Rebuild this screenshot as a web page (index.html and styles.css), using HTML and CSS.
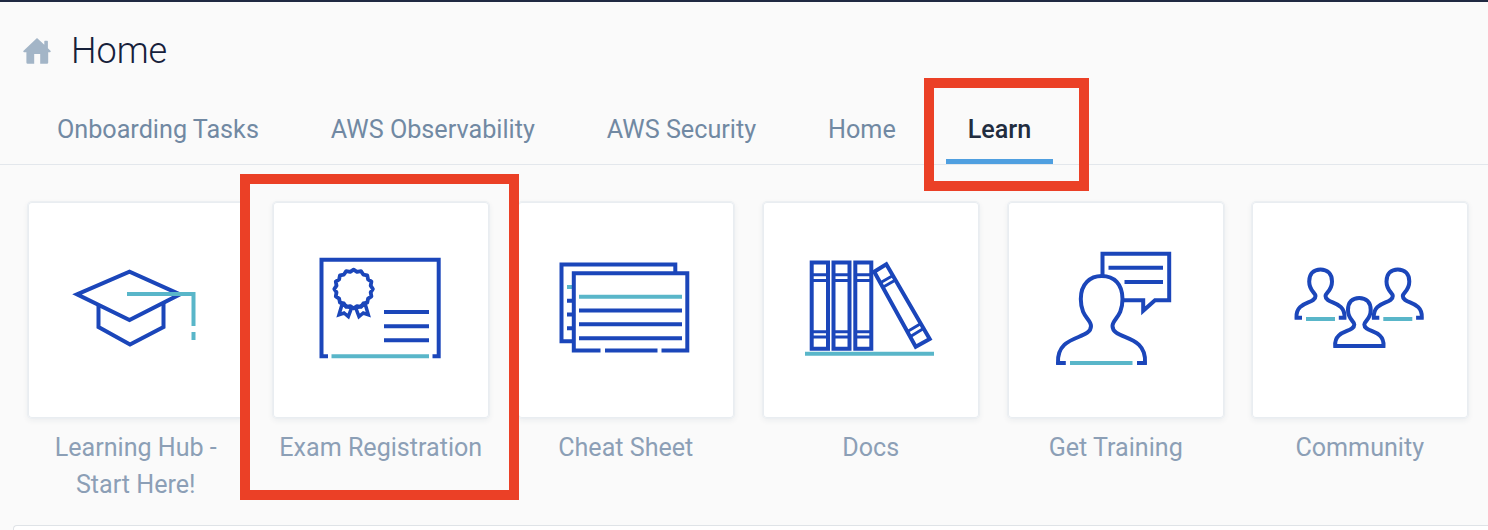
FILE: index.html
```html
<!DOCTYPE html>
<html lang="en">
<head>
<meta charset="utf-8">
<title>Home</title>
<link rel="stylesheet" href="styles.css">
</head>
<body>
<header class="page-header">
  <svg class="home-icon" viewBox="0 0 28 26"><path d="M14 0 L21.3 6.7 V3.4 Q21.3 2.7 22 2.7 H24.2 Q24.9 2.7 24.9 3.4 V10.2 L27.7 13 Q28 14 27 14.2 H25.2 V24.6 Q25.2 25.8 24 25.8 H17.2 V16 H11.2 V25.8 H4.600 Q3.400 25.800 3.400 24.600 V14.200 H1 Q0 14 .3 13 Z"/></svg>
  <h1 class="title">Home</h1>
</header>
<nav class="tabs">
  <a class="tab">Onboarding Tasks</a>
  <a class="tab">AWS Observability</a>
  <a class="tab">AWS Security</a>
  <a class="tab">Home</a>
  <a class="tab active">Learn</a>
</nav>
<main class="tiles">
  <a class="tile">
    <svg class="art" viewBox="28 202 216 216">
      <path d="M98.500 305 V327 L130 344.500 L163.500 327 V303"/>
      <path d="M77 294.300 L129.500 271.700 L180 294.300 L129.500 320 Z"/>
      <path class="teal" d="M127 294 H193.500 V326 M193.500 332 V340"/>
    </svg>
    <span class="label">Learning Hub -<br>Start Here!</span>
  </a>
  <a class="tile">
    <svg class="art" viewBox="273 202 216 216">
      <path d="M328 356.300 H321.500 V259.800 H438.700 V356.300 H432.500"/>
      <path class="rosette" transform="translate(353.600 289)" d="M19.300 0 L17.070 3.390 L17.830 7.390 L14.470 9.670 L13.650 13.650 L9.670 14.470 L7.390 17.830 L3.390 17.070 L0 19.300 L-3.390 17.070 L-7.390 17.830 L-9.670 14.470 L-13.650 13.650 L-14.470 9.670 L-17.830 7.390 L-17.070 3.390 L-19.300 0 L-17.070 -3.390 L-17.830 -7.390 L-14.470 -9.670 L-13.650 -13.650 L-9.670 -14.470 L-7.390 -17.830 L-3.390 -17.070 L0 -19.300 L3.390 -17.070 L7.390 -17.830 L9.670 -14.470 L13.650 -13.650 L14.470 -9.670 L17.830 -7.390 L17.070 -3.390 Z"/>
      <path class="ribbon" d="M342 304.500 L339 314.800 L344 313 L348.300 316.500 L351.500 308 Z M365.300 304.500 L368.300 314.800 L363.300 313 L359 316.500 L355.800 308 Z"/>
      <path d="M384 312 H429 M384 326.200 H429 M384 340.200 H429"/>
      <path class="teal" d="M331.500 356.300 H429"/>
    </svg>
    <span class="label">Exam Registration</span>
  </a>
  <a class="tile">
    <svg class="art" viewBox="518 202 216 216">
      <path d="M675.300 272 V264.500 H561.500 V341.300 H573"/>
      <path class="teal" d="M567 287 H573 M579 296.800 H682"/>
      <path d="M567 300.700 H573 M567 314.500 H573 M567 328.300 H573 M579 310.500 H682 M579 324.300 H682 M579 338.200 H682"/>
      <path d="M600.500 350.500 H573.800 V273.300 H687.300 V350.500 H661.500 M605 350.500 H657.500"/>
    </svg>
    <span class="label">Cheat Sheet</span>
  </a>
  <a class="tile">
    <svg class="art" viewBox="763 202 216 216">
      <path d="M811.700 262.500 H828 V348.700 H811.700 Z M833.500 262.500 H849.500 V348.700 H833.500 Z M855.300 262.500 H871.300 V348.700 H855.300 Z"/>
      <path class="band" d="M812 274.700 H828 M812 280.500 H828 M812 331.700 H828 M812 337 H828 M834 274.700 H849 M834 280.500 H849 M834 331.700 H849 M834 337 H849 M856 274.700 H871 M856 280.500 H871 M856 331.700 H871 M856 337 H871"/>
      <path d="M874.200 271.800 L886.300 264.300 L929.700 339 L915.700 346.800 Z"/>
      <path class="band" d="M879.500 283.300 L893 275.500 M882.500 287.500 L895.500 280 M907.500 331.500 L921 323.500 M910.500 336.500 L923.500 328.500"/>
      <path class="teal" d="M805 353.800 H934"/>
    </svg>
    <span class="label">Docs</span>
  </a>
  <a class="tile">
    <svg class="art" viewBox="1008 202 216 216">
      <path d="M1102.500 275.500 V253.700 H1169.200 V300.300 H1155 L1143.200 310.800 V300.300 H1123"/>
      <path d="M1108.500 267.800 H1163 M1124.500 282 H1163"/>
      <path d="M1065.800 363 H1058 C1056.500 333.500 1091 340.500 1091 326 C1091 319 1080.800 317 1080.800 299 C1080.800 284 1090 276 1101.800 276 C1114 276 1122.500 284 1122.500 299 C1122.500 317 1112.500 319 1112.500 326 C1112.500 340.500 1147 333.500 1145 363 H1137"/>
      <path class="teal" d="M1070 363 H1132.500"/>
    </svg>
    <span class="label">Get Training</span>
  </a>
  <a class="tile">
    <svg class="art" viewBox="1252 202 216 216">
      <g id="side-person">
        <path d="M1302 317.700 H1296.500 C1295.500 300.500 1315.500 304.500 1315.500 296 C1315.500 292.500 1309.200 291 1309.200 281.500 C1309.200 273.500 1314 269.500 1320.500 269.500 C1327 269.500 1332 273.500 1332 281.500 C1332 291 1325.500 292.500 1325.500 296 C1325.500 304.500 1345.500 300.500 1344.500 317.700 H1338.800"/>
        <path class="teal" d="M1306 319 H1335"/>
      </g>
      <use href="#side-person" x="77.300"/>
      <path d="M1335.200 346 C1334 329 1354.300 333 1354.300 324.500 C1354.300 321 1348 319.500 1348 310 C1348 302 1352.500 298 1359.200 298 C1366 298 1370.700 302 1370.700 310 C1370.700 319.500 1364.300 321 1364.300 324.500 C1364.300 333 1384.500 329 1383.500 346 Z"/>
    </svg>
    <span class="label">Community</span>
  </a>
</main>
<section class="panel"></section>
<div class="highlight highlight-tab"></div>
<div class="highlight highlight-tile"></div>
</body>
</html>
```
FILE: styles.css
```css
* { box-sizing: border-box; }
body {
  margin: 0;
  height: 530px;
  overflow: hidden;
  position: relative;
  border-top: 2px solid #1f2942;
  background: #fafafa;
  font-family: Roboto, "Liberation Sans", sans-serif;
}
.page-header {
  display: flex;
  align-items: center;
  height: 98px;
  padding-left: 23px;
}
.home-icon { width: 28px; height: 26px; fill: #a3b5c7; }
.title {
  margin: 0 0 0 20px;
  font-size: 36px;
  font-weight: 300;
  line-height: 42px;
  color: #16203a;
}
.tabs {
  display: flex;
  gap: 28.7px;
  height: 65px;
  padding-left: 35.3px;
  border-bottom: 1px solid #e3e7ec;
}
.tab {
  height: 64px;
  padding: 15px 21.6px 0;
  font-size: 25.2px;
  line-height: 30px;
  color: #7189a3;
  white-space: nowrap;
}
.active {
  border-bottom: 5px solid #4f9fe0;
  font-weight: 500;
  color: #222d3f;
}
.tiles {
  display: flex;
  gap: 29px;
  padding: 37px 0 0 28px;
  height: 360px;
}
.tile { width: 216px; flex: none; text-align: center; }
.tile:last-child { margin-left: -1px; }
.art {
  display: block;
  width: 216px;
  height: 216px;
  border-radius: 4px;
  background: #fff;
  box-shadow: inset 0 0 0 1px #e9edf1, 0 0 0 1px #eceff2, 0 2px 6px rgba(40, 60, 90, .08);
  fill: none;
  stroke: #1b46ba;
  stroke-width: 4;
}
.teal { stroke: #59b6c9; }
.rosette { stroke-width: 3.800; stroke-linejoin: round; }
.ribbon { stroke-width: 3.500; }
.band { stroke-width: 3; }
.label {
  display: block;
  margin-left: -.5px;
  padding-top: 11px;
  font-size: 25.1px;
  line-height: 37px;
  color: #8c9fb6;
}
.panel {
  margin-left: 13px;
  height: 20px;
  border: 1px solid #dfe3e7;
  border-right: 0;
  border-radius: 4px 0 0 0;
  background: #fff;
}
.highlight { position: absolute; border: 10px solid #eb4026; }
.highlight-tab { left: 924px; top: 76px; width: 165px; height: 113px; }
.highlight-tile { left: 240px; top: 172px; width: 279px; height: 326px; }
```
